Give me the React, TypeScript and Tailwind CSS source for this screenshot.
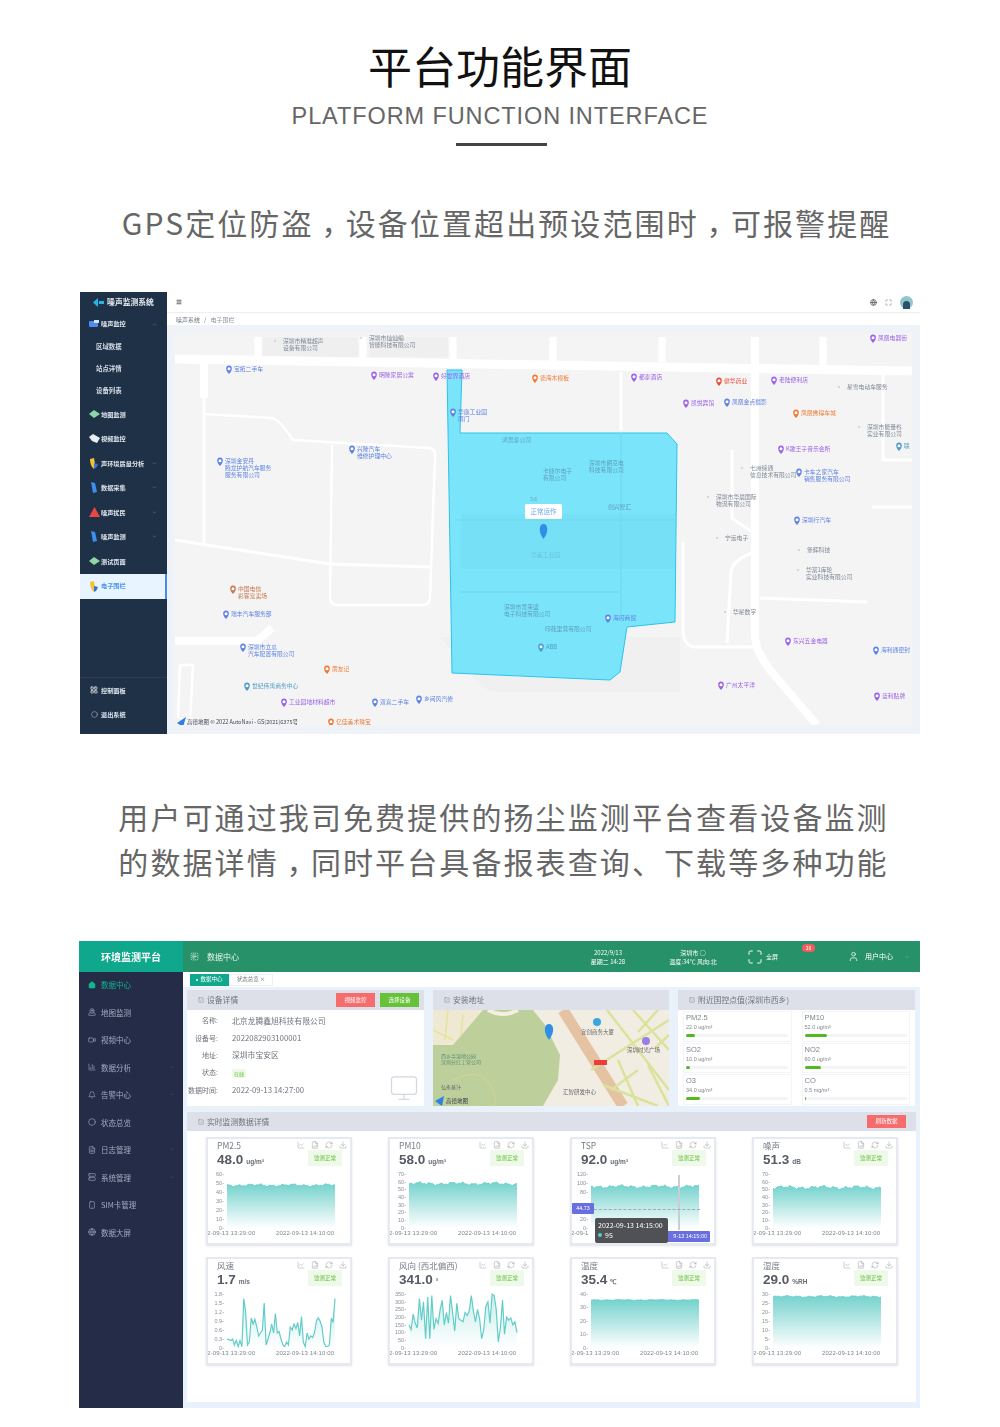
import React from "react";
import { Home, MapPinned, Video, BarChart3, Bell, Circle, FileText, Server, Smartphone, Globe, ChevronDown, ChevronUp, Maximize, User, Monitor, LayoutGrid, TextSelect, Menu, RefreshCw, Download, LineChart, FileBarChart, SquareCheck } from "lucide-react";

const CJK = '"Noto Sans CJK SC","Liberation Sans",sans-serif';

type Lbl = { x: number; y: number; c?: string; t: string[] };
const BLUE = "#5c82e2", PURPLE = "#9a62e6", ORANGE = "#ef7a33", RED = "#ee4b3a", TEAL = "#4d9cc7", BROWN = "#c9784f";
const labels: Lbl[] = [
  { x: 198, y: 49, t: ["深圳市精准超声", "设备有限公司"] },
  { x: 284, y: 46, t: ["深圳市灿灿编", "智能科技有限公司"] },
  { x: 149, y: 77, c: BLUE, t: ["宝拓二手车"] },
  { x: 294, y: 83, c: PURPLE, t: ["明隆家居公寓"] },
  { x: 356, y: 84, c: PURPLE, t: ["好世界酒店"] },
  { x: 373, y: 120, c: BLUE, t: ["华康工业园", "南门"] },
  { x: 140, y: 169, c: BLUE, t: ["深圳金安丹", "腾龙护航汽车服务", "服务有限公司"] },
  { x: 272, y: 157, c: BLUE, t: ["兴隆汽车", "维修护理中心"] },
  { x: 153, y: 297, c: BROWN, t: ["中国电信", "彩客宠卖场"] },
  { x: 146, y: 322, c: BLUE, t: ["瑞丰汽车服务部"] },
  { x: 163, y: 355, c: BLUE, t: ["深圳市立瓜", "汽车配置有限公司"] },
  { x: 247, y: 377, c: ORANGE, t: ["南友记"] },
  { x: 167, y: 394, c: TEAL, t: ["世纪伟禹商务中心"] },
  { x: 204, y: 410, c: PURPLE, t: ["工业园地材料超市"] },
  { x: 295, y: 410, c: BLUE, t: ["双喜二手车"] },
  { x: 339, y: 407, c: BLUE, t: ["乡间风汽修"] },
  { x: 251, y: 430, c: ORANGE, t: ["亿佳美术珠宝"] },
  { x: 793, y: 46, c: PURPLE, t: ["凤凰电器街"] },
  { x: 455, y: 86, c: ORANGE, t: ["德海木模板"] },
  { x: 554, y: 85, c: PURPLE, t: ["都泰酒店"] },
  { x: 639, y: 89, c: RED, t: ["健华药业"] },
  { x: 694, y: 88, c: PURPLE, t: ["老陆便利店"] },
  { x: 762, y: 95, t: ["星雪电动车服务"] },
  { x: 606, y: 111, c: PURPLE, t: ["凯悦宾馆"] },
  { x: 647, y: 110, c: BLUE, t: ["凤凰金点摄影"] },
  { x: 716, y: 121, c: ORANGE, t: ["凤凰佛得车城"] },
  { x: 782, y: 135, t: ["深圳市能量谷", "实业有限公司"] },
  { x: 819, y: 154, c: TEAL, t: ["联"] },
  { x: 701, y: 157, c: PURPLE, t: ["K歌王子音乐会所"] },
  { x: 665, y: 176, t: ["七洲综通", "信息技术有限公司"] },
  { x: 719, y: 180, c: BLUE, t: ["卡车之家汽车", "销售服务有限公司"] },
  { x: 631, y: 205, t: ["深圳市华晨国际", "物流有限公司"] },
  { x: 717, y: 228, c: BLUE, t: ["深圳行汽车"] },
  { x: 640, y: 246, t: ["宁远电子"] },
  { x: 722, y: 258, t: ["堡辉科技"] },
  { x: 721, y: 278, t: ["华富1库轮", "实业科技有限公司"] },
  { x: 648, y: 320, t: ["华星数字"] },
  { x: 708, y: 349, c: PURPLE, t: ["东兴五金电器"] },
  { x: 796, y: 358, c: BLUE, t: ["海利通密封"] },
  { x: 641, y: 393, c: PURPLE, t: ["广州太平洋"] },
  { x: 797, y: 404, c: PURPLE, t: ["蓝利贴牌"] },
  { x: 528, y: 326, c: BLUE, t: ["海闪商贸"] },
  { x: 461, y: 355, c: TEAL, t: ["ABB"] },
];
const inPolyText = [
  { x: 422, y: 150, t: "鸿景泰公司" },
  { x: 509, y: 173, t: "深圳市朗克电" },
  { x: 509, y: 180, t: "科技有限公司" },
  { x: 463, y: 181, t: "卡捷尔电子" },
  { x: 463, y: 188, t: "有限公司" },
  { x: 528, y: 217, t: "创兴智汇" },
  { x: 451, y: 265, t: "华美工业园" },
  { x: 424, y: 317, t: "深圳市景来盛" },
  { x: 424, y: 324, t: "电子科技有限公司" },
  { x: 465, y: 339, t: "印苑里营有限公司" },
];
const roads = [
  { d: "M95 67L832 79", w: 9 },
  { d: "M178 45V68M283 45V68M373 45V68M473 45V70M582 45V70M743 45V74", w: 7 },
  { d: "M675 45V345Q676 360 690 378L737 433", w: 8 },
  { d: "M124 70V106", w: 8 },
  { d: "M124 106V253M125 122L192 126Q200 128 213 148L350 156Q356 158 355 165L350 305Q350 313 343 313H258Q250 313 250 306L252 153", w: 2.5 },
  { d: "M95 248L250 272L350 275", w: 3 },
  { d: "M95 349H177L192 336", w: 8 },
  { d: "M100 373H113L110 431L98 425Z", w: 2.5 },
  { d: "M541 80V138M652 158V226L672 240M603 250V340Q604 354 615 355H673M672 261Q653 268 651 280L647 351M680 306L787 310M803 81V168H832M792 215H832", w: 3 },
];

function Pin({ x, y, c }: { x: number; y: number; c: string }) {
  return (
    <g>
      <path d={`M${x} ${y + 5}C${x - 4} ${y + 1} ${x - 3.6} ${y - 3.6} ${x} ${y - 3.6}C${x + 3.6} ${y - 3.6} ${x + 4} ${y + 1} ${x} ${y + 5}Z`} fill={c} />
      <circle cx={x} cy={y - 0.3} r="1.5" fill="#fff" />
    </g>
  );
}

function NoiseMap() {
  return (
    <svg viewBox="95 41 737 392" className="block h-full w-full bg-[#f4f4f5]" style={{ fontFamily: CJK }}>
      <rect x="183" y="45" width="95" height="20" fill="#efeff0" />
      <rect x="290" y="45" width="78" height="20" fill="#efeff0" />
      <path d="M360 345H600V400H420Q400 400 390 380Z" fill="#f0f0f1" />
      {roads.map((r, i) => (
        <path key={i} d={r.d} fill="none" stroke="#fff" strokeWidth={r.w} strokeLinejoin="round" />
      ))}
      <path d="M367 78H382L380 141H587L597 152L595 330L547 335L540 380L530 388L372 381Z" fill="#7ae4fa" stroke="#2cc3ea" strokeWidth="1" />
      <path d="M541 141V330M375 228H595M380 300H540" stroke="#74ddf5" strokeWidth="2" fill="none" />
      <rect x="381" y="222" width="214" height="55" fill="#72dcf4" opacity="0.5" />
      {labels.map((l, i) => (
        <g key={i}>
          {l.c ? <Pin x={l.x} y={l.y} c={l.c} /> : <circle cx={l.x - 3} cy={l.y} r="0.8" fill="#a9b2c2" />}
          {l.t.map((s, j) => (
            <text key={j} x={l.x + 5} y={l.y + 2 + j * 7} fontSize="5.8" fill={l.c || "#7e8795"}>
              {s}
            </text>
          ))}
        </g>
      ))}
      {inPolyText.map((t, i) => (
        <text key={i} x={t.x} y={t.y} fontSize="5.8" fill="#5d9fb8" opacity={t.t === "华美工业园" ? 0.45 : 1}>
          {t.t}
        </text>
      ))}
      <rect x="445" y="212" width="37" height="15" rx="1.5" fill="#fff" />
      <text x="463.5" y="222" fontSize="6.5" fill="#6aa8f0" textAnchor="middle">正常运作</text>
      <text x="450" y="209" fontSize="5" fill="#5d9fb8">3.6</text>
      <path d="M463.5 247C458 240 459 232 463.5 232C468 232 469 240 463.5 247Z" fill="#2f8fe6" />
      <path d="M97 431L106 425L103 435Z" fill="#2f7fe6" />
      <text x="107" y="432" fontSize="5.5" fill="#445">高德地图 © 2022 AutoNavi - GS(2021)6375号</text>
    </svg>
  );
}

function Shape({ k }: { k: string }) {
  if (k === "card") return <svg width="10" height="8" viewBox="0 0 10 8"><rect y="1" width="9" height="6" rx="1" fill="#4e8df0" /><rect x="5" width="5" height="3" fill="#cfe0fb" /></svg>;
  if (k === "dia") return <svg width="11" height="8" viewBox="0 0 11 8"><path d="M0 4L5 0L11 4L5 8Z" fill="#8ed6a6" /></svg>;
  if (k === "chat") return <svg width="11" height="9" viewBox="0 0 11 9"><path d="M0 3L4 0L11 4L8 9L3 7Z" fill="#e9eef5" /></svg>;
  if (k === "shield") return <svg width="10" height="11" viewBox="0 0 10 11"><path d="M1 1L5 0L6 6L5 11Q1 8 1 1Z" fill="#f4c430" /><path d="M5 5L9 6Q8 10 5 11Z" fill="#3b6fe0" /></svg>;
  if (k === "tall") return <svg width="8" height="11" viewBox="0 0 8 11"><path d="M1 0L5 1L7 10L3 11Z" fill="#3f8df0" /></svg>;
  if (k === "tri") return <svg width="11" height="10" viewBox="0 0 11 10"><path d="M5.5 0L11 10H0Z" fill="#ef4444" /></svg>;
  if (k === "grid") return <LayoutGrid size={8} color="#d7dde6" strokeWidth={2.5} />;
  return <Circle size={7} color="#d7dde6" strokeWidth={1.5} />;
}

function NoiseSide() {
  const Row = ({ icon, t, arrow, h = "h-[24.5px]" }: { icon: string; t: string; arrow?: "up" | "down"; h?: string }) => (
    <div className={`flex items-center ${h} pl-2 pr-[10px] text-[6.2px] font-bold whitespace-nowrap text-[#dfe5ee]`}>
      <span className="flex w-[12px] justify-center"><Shape k={icon} /></span>
      <span className="ml-[1px] flex-1">{t}</span>
      {arrow === "up" && <ChevronUp size={5} color="#8b97a8" />}
      {arrow === "down" && <ChevronDown size={5} color="#8b97a8" />}
    </div>
  );
  return (
    <aside className="flex w-[87px] shrink-0 flex-col bg-[#1f3146]">
      <div className="flex h-[20px] items-center justify-center gap-[3px] text-[7.8px] font-bold text-[#e6ecf3]">
        <svg width="11" height="9" viewBox="0 0 11 9"><path d="M0 4.5L5 0V9Z" fill="#27b5e8" /><rect x="6" y="3" width="5" height="3" fill="#27b5e8" /></svg>
        噪声监测系统
      </div>
      <Row icon="card" t="噪声监控" arrow="up" h="h-[24px]" />
      {["区域数据", "站点详情", "设备列表"].map((s) => (
        <div key={s} className="flex h-[22px] items-center pl-[16px] text-[6.4px] font-bold text-[#d5dce6]">{s}</div>
      ))}
      <Row icon="dia" t="地图监测" />
      <Row icon="chat" t="视频监控" />
      <Row icon="shield" t="声环境质量分析" arrow="down" />
      <Row icon="tall" t="数据采集" arrow="down" />
      <Row icon="tri" t="噪声扰民" arrow="down" />
      <Row icon="tall" t="噪声监测" arrow="down" />
      <Row icon="dia" t="测试页面" />
      <div className="flex h-[25px] items-center border-r-2 border-[#3f8df0] bg-[#e8f4ff] pl-2 text-[6.2px] font-bold text-[#4c96ee]">
        <span className="flex w-[12px] justify-center"><Shape k="shield" /></span>
        <span className="ml-[1px]">电子围栏</span>
      </div>
      <div className="flex-1" />
      <div className="border-t border-[#2b3d52] pb-[7px]">
        <Row icon="grid" t="控制面板" />
        <Row icon="circle" t="退出系统" />
      </div>
    </aside>
  );
}

function ScreenOne() {
  return (
    <div className="flex h-[442px] w-[840px] overflow-hidden bg-white blur-[0.7px]">
      <NoiseSide />
      <main className="flex min-w-0 flex-1 flex-col">
        <div className="flex h-[21px] items-center justify-between border-b border-[#eceef2] pl-[9px] pr-[7px]">
          <Menu size={6} color="#333" strokeWidth={3} />
          <div className="flex items-center gap-[8px]">
            <Globe size={7} color="#555" strokeWidth={2.5} />
            <Maximize size={7} color="#777" />
            <span className="flex h-[13px] w-[13px] items-end justify-center rounded-full bg-[#8fc6c9]">
              <span className="h-[8px] w-[7px] rounded-t-full bg-[#2f4f6e]" />
            </span>
          </div>
        </div>
        <div className="flex h-[12px] items-center gap-[4px] pl-[9px] text-[6px] text-[#6e7785]">
          <span>噪声系统</span><span>/</span><span className="text-[#8a92a0]">电子围栏</span>
        </div>
        <div className="min-h-0 flex-1 bg-[#eff2f7] p-[8px] pb-[9px]">
          <NoiseMap />
        </div>
      </main>
    </div>
  );
}

function series(seed: number, base: number, amp: number, n = 70) {
  const out: number[] = [];
  for (let i = 0; i < n; i++) {
    const v = base + amp * (Math.sin(i * 0.9 + seed) * 0.5 + Math.sin(i * 2.3 + seed * 2) * 0.35 + Math.sin(i * 0.27 + seed * 3) * 0.4);
    out.push(v);
  }
  return out;
}
const wind = [0.3, 0.28, 0.25, 0.3, 0.1, 0.25, 0.05, 0.25, 0.05, 1.65, 1.2, 0.1, 0.2, 1.0, 0.8, 0.95, 0.7, 0.4, 0.5, 0.6, 1.5, 0.1, 0.3, 0.5, 0.8, 0.5, 1.15, 0.5, 0.55, 0.3, 0.1, 0.05, 0.2, 0.1, 0.7, 0.6, 0.8, 0.65, 0.85, 0.4, 1.05, 0.2, 0.05, 0.5, 0.3, 0.4, 0.35, 0.5, 0.9, 1.0, 0.9, 0.7, 0.2, 0.05, 0.05, 0.1, 1.0, 0.85, 1.65];
const dir = [150, 120, 220, 160, 130, 320, 180, 300, 60, 330, 60, 340, 120, 190, 160, 250, 310, 150, 230, 160, 340, 230, 110, 290, 190, 180, 170, 230, 210, 240, 340, 240, 170, 250, 190, 60, 120, 270, 300, 160, 350, 340, 250, 40, 130, 310, 90, 200, 180, 195, 150, 170, 100];

type Cfg = { title: string; val: string; unit: string; max: number; ticks: number[]; data: number[] };
const cards: Cfg[] = [
  { title: "PM2.5", val: "48.0", unit: "ug/m³", max: 60, ticks: [0, 10, 20, 30, 40, 50, 60], data: series(1, 47.5, 1.6) },
  { title: "PM10", val: "58.0", unit: "ug/m³", max: 70, ticks: [0, 10, 20, 30, 40, 50, 60, 70], data: series(2, 57.5, 2.2) },
  { title: "TSP", val: "92.0", unit: "ug/m³", max: 120, ticks: [0, 20, 80, 100, 120], data: series(3, 92, 4) },
  { title: "噪声", val: "51.3", unit: "dB", max: 70, ticks: [0, 10, 20, 30, 40, 50, 60, 70], data: series(4, 52.5, 2.6) },
  { title: "风速", val: "1.7", unit: "m/s", max: 1.8, ticks: [0, 0.3, 0.6, 0.9, 1.2, 1.5, 1.8], data: wind },
  { title: "风向 (西北偏西)", val: "341.0", unit: "°", max: 350, ticks: [0, 50, 100, 150, 200, 250, 300, 350], data: dir },
  { title: "温度", val: "35.4", unit: "℃", max: 40, ticks: [0, 10, 20, 30, 40], data: series(5, 35.6, 0.35) },
  { title: "湿度", val: "29.0", unit: "%RH", max: 30, ticks: [0, 5, 10, 15, 20, 25, 30], data: series(6, 28.6, 0.55) },
];

function Chart({ c, id }: { c: Cfg; id: number }) {
  const x0 = 19, x1 = 127, top = 3, bot = 57;
  const xs = (i: number) => x0 + (i * (x1 - x0)) / (c.data.length - 1);
  const ys = (v: number) => bot - (v / c.max) * (bot - top);
  const line = c.data.map((v, i) => `${i ? "L" : "M"}${xs(i).toFixed(1)} ${ys(v).toFixed(1)}`).join("");
  const gid = `g${id}`;
  const spiky = id === 4 || id === 5;
  return (
    <svg viewBox="0 0 142 72" className="block h-[72px] w-[142px]" style={{ fontFamily: '"Liberation Sans",sans-serif' }}>
      <defs>
        <linearGradient id={gid} x1="0" y1="0" x2="0" y2="1">
          <stop offset="0" stopColor="#74d2cd" />
          <stop offset="1" stopColor="#ffffff" />
        </linearGradient>
      </defs>
      {c.ticks.map((t) => (
        <text key={t} x="16" y={ys(t) + 1.8} fontSize="5.5" fill="#8a8f99" textAnchor="end">{t}-</text>
      ))}
      <path d={`${line}L${x1} ${bot}L${x0} ${bot}Z`} fill={`url(#${gid})`} opacity={spiky ? 0.4 : 1} />
      <path d={line} fill="none" stroke="#62cdc8" strokeWidth={spiky ? 1.2 : 0.8} />
      {id === 2 ? (
        <text x="-1" y="64" fontSize="6" fill="#7f848e">2-09-1</text>
      ) : (
        <>
          <text x="-1" y="64" fontSize="6" fill="#7f848e" textLength="48">2-09-13 13:29:00</text>
          <text x="68" y="64" fontSize="6" fill="#7f848e" textLength="58">2022-09-13 14:10:00</text>
        </>
      )}
    </svg>
  );
}

function MiniIcons() {
  return (
    <div className="flex items-center gap-[6px] text-[#8b8f99]">
      <LineChart size={8} strokeWidth={1.3} />
      <FileBarChart size={8} strokeWidth={1.3} />
      <RefreshCw size={8} strokeWidth={1.3} />
      <Download size={8} strokeWidth={1.3} />
    </div>
  );
}

function DataCard({ c, i }: { c: Cfg; i: number }) {
  return (
    <div className="relative h-[108px] w-[146px] border-2 border-[#e6e8f2] bg-white shadow-[0_1px_2px_#dfe2ea]">
      <div className="flex h-[32px] justify-between pl-[9px] pr-[3px]">
        <div>
          <div className="text-[8.5px] leading-[12px] text-[#777c86]">{c.title}</div>
          <div className="mt-[1px] flex items-baseline gap-[3px] text-[13.5px] font-bold leading-[15px] text-[#555a63] font-['Liberation_Sans']">
            {c.val}<span className="text-[6.5px] text-[#666b75]">{c.unit}</span>
          </div>
        </div>
        <div className="flex flex-col items-end pt-[2px]">
          <MiniIcons />
          <div className="mr-[5px] mt-[1px] flex h-[16px] w-[34px] items-center justify-center bg-[#eef9ea] text-[5.5px] text-[#67c23a]">监测正常</div>
        </div>
      </div>
      <Chart c={c} id={i} />
      {i === 2 && (
        <>
          <div className="absolute left-[106px] top-[36px] h-[55px] w-[1.5px] bg-[#c9cdd4]" />
          <div className="absolute left-[22px] top-[70px] w-[106px] border-t border-dashed border-[#a5a9b2]" />
          <div className="absolute left-0 top-[64px] flex h-[11px] w-[22px] items-center justify-center rounded-[1px] bg-[#6a6fe0] text-[5.5px] text-white">44.73</div>
          <div className="absolute left-[73px] top-[92px] flex h-[11px] w-[65px] items-center justify-end rounded-[1px] bg-[#6a6fe0] pr-[3px] text-[5.5px] text-white">9-13 14:15:00</div>
          <div className="absolute left-[23px] top-[79px] h-[25px] w-[73px] rounded-[2px] bg-[#4f5154] px-[3px] py-[2px] text-[7px] leading-[10px] text-white">
            <div>2022-09-13 14:15:00</div>
            <div className="flex items-center gap-[3px]"><span className="h-[4px] w-[4px] rounded-full bg-[#4fd1c5]" />95</div>
          </div>
        </>
      )}
    </div>
  );
}

function MiniMap() {
  return (
    <svg viewBox="0 0 236 96" className="block h-full w-full bg-[#f2ede3]" style={{ fontFamily: CJK }}>
      <path d="M0 35L30 20L45 0H100L112 15L127 45L125 70L110 96H0Z" fill="#bdd09c" />
      <path d="M0 35H20L50 0H0Z" fill="#efe9d4" />
      <path d="M0 20L20 30M15 0L12 30M30 5L28 25" stroke="#e6e39a" strokeWidth="1.5" fill="none" />
      <path d="M55 0Q70 8 85 0" stroke="#f3efe2" strokeWidth="4" fill="none" />
      <path d="M20 70Q50 55 60 80T40 96" stroke="#dcd98f" strokeWidth="0.7" fill="none" />
      <path d="M130 0L190 96" stroke="#e5c2a1" strokeWidth="11" />
      <path d="M174 0L236 80M158 60L236 10M200 0L236 40M170 75L225 96M185 50L205 96M215 55L236 96M205 22L225 0M222 38L236 25M178 80L205 60" stroke="#d9e39c" strokeWidth="2.5" fill="none" />
      <rect x="161" y="50" width="13" height="5" fill="#ee3b3b" />
      <path d="M116 30C110 22 111 14 116 14C121 14 122 22 116 30Z" fill="#2f8fe6" />
      <circle cx="164" cy="12" r="4" fill="#3aa5de" />
      <text x="148" y="24" fontSize="5.5" fill="#666">宜创商务大厦</text>
      <circle cx="213" cy="31" r="4" fill="#9a7fe0" />
      <text x="194" y="42" fontSize="5.5" fill="#666">深圳时光广场</text>
      <text x="130" y="84" fontSize="5.5" fill="#666">汇智研发中心</text>
      <text x="8" y="48" fontSize="5" fill="#5f8f75">西乡寺湿地公园</text>
      <text x="8" y="54" fontSize="5" fill="#5f8f75">深圳分红工管公司</text>
      <text x="8" y="79" fontSize="5" fill="#666">弘永基汁</text>
      <path d="M2 91L11 86L9 96Z" fill="#2f7fe6" />
      <text x="13" y="93" fontSize="5.5" fill="#334">高德地图</text>
    </svg>
  );
}

function PanelHead({ t, right }: { t: string; right?: React.ReactNode }) {
  return (
    <div className="flex h-[20px] shrink-0 items-center justify-between bg-[#dde0e8] pl-[11px] pr-[5px] text-[7.8px] text-[#6d727c]">
      <span className="flex items-center gap-[3px]"><SquareCheck size={6} strokeWidth={1.5} />{t}</span>
      {right}
    </div>
  );
}

const air = [
  ["PM2.5", "22.0 ug/m³", "w-[9px]"],
  ["PM10", "52.0 ug/m³", "w-[22px]"],
  ["SO2", "10.0 ug/m³", "w-[4px]"],
  ["NO2", "60.0 ug/m³", "w-[16px]"],
  ["O3", "34.0 ug/m³", "w-[14px]"],
  ["CO", "0.5 mg/m³", "w-[1px]"],
];

const menu: [React.ComponentType<any>, string, boolean][] = [
  [Home, "数据中心", false],
  [MapPinned, "地图监测", false],
  [Video, "视频中心", false],
  [BarChart3, "数据分析", true],
  [Bell, "告警中心", true],
  [Circle, "状态总览", false],
  [FileText, "日志管理", true],
  [Server, "系统管理", true],
  [Smartphone, "SIM卡管理", false],
  [Globe, "数据大屏", false],
];

function ScreenTwo() {
  return (
    <div className="h-[467px] w-[841px] overflow-hidden bg-white blur-[0.55px]">
      <header className="flex h-[31px] items-center bg-[#27916a] text-white">
        <div className="flex h-full w-[104px] items-center justify-center bg-[#0fa88c] text-[10px] font-bold">环境监测平台</div>
        <TextSelect size={9} className="ml-[7px]" color="#d8efe6" />
        <span className="ml-[8px] text-[8px] text-[#e6f4ee]">数据中心</span>
        <div className="ml-auto w-[60px] text-center text-[6px] leading-[9px]">2022/9/13<br />星期二 14:28</div>
        <div className="ml-[20px] w-[70px] text-center text-[6px] leading-[9px]">深圳市 ○<br />温度:34℃ 风向:北</div>
        <div className="ml-[19px] flex items-center gap-[3px] text-[6px]"><Maximize size={16} strokeWidth={1.5} />全屏</div>
        <div className="relative ml-[70px] flex items-center gap-[3px] text-[7px]">
          <span className="absolute -left-[46px] -top-[7px] h-[8px] w-[13px] rounded-full bg-[#f25c5c] text-center text-[5px] leading-[8px]">28</span>
          <User size={11} strokeWidth={1.6} />
          <span className="ml-[3px]">用户中心</span>
        </div>
        <ChevronDown size={6} className="ml-[11px] mr-[10px]" color="#6fb79a" />
      </header>
      <div className="flex h-[436px]">
        <aside className="w-[104px] shrink-0 bg-[#242c47]">
          <div className="-mt-[1px]">
            {menu.map(([Icon, t, arrow], i) => (
              <div key={t} className="flex h-[27.5px] items-center pl-[9px] pr-[9px] text-[7.5px] text-[#a4abc0]">
                <Icon size={8} color={i === 0 ? "#11b592" : "#b8bdcc"} fill={i === 0 ? "#11b592" : "none"} strokeWidth={1.6} />
                <span className={`ml-[5px] flex-1 ${i === 0 ? "text-[#11b592]" : ""}`}>{t}</span>
                {arrow && <ChevronDown size={5} color="#5d6580" />}
              </div>
            ))}
          </div>
        </aside>
        <main className="flex min-w-0 flex-1 flex-col bg-[#e9f1fb]">
          <div className="flex h-[15px] shrink-0 items-center bg-white pl-[7px] text-[5.5px] text-[#777]">
            <span className="flex h-[12px] w-[39px] items-center justify-center gap-[2px] bg-[#0fa88c] text-white"><span className="h-[2px] w-[2px] rounded-full bg-white" />数据中心</span>
            <span className="flex h-[12px] w-[44px] items-center justify-center border border-[#edf0f4]">状态总览 ×</span>
          </div>
          <div className="flex flex-1 flex-col pb-[6px] pl-[4px] pr-[4px] pt-[3px]">
            <div className="flex h-[116px] gap-[9px]">
              <section className="flex w-[237px] flex-col bg-white">
                <PanelHead
                  t="设备详情"
                  right={
                    <span className="flex gap-[5px] text-[5.5px] text-white">
                      <span className="flex h-[14px] w-[39px] items-center justify-center bg-[#f56c6c]">视频监控</span>
                      <span className="flex h-[14px] w-[39px] items-center justify-center bg-[#67c23a]">选择设备</span>
                    </span>
                  }
                />
                <div className="relative flex-1 pt-[2px] text-[7.8px] text-[#6f747e]">
                  {[["名称:", "北京龙腾鑫旭科技有限公司"], ["设备号:", "2022082903100001"], ["地址:", "深圳市宝安区"], ["状态:", ""], ["数据时间:", "2022-09-13 14:27:00"]].map(([a, b], i) => (
                    <div key={a} className="flex h-[17.3px] items-center">
                      <span className="flex w-[31px] shrink-0 justify-end whitespace-nowrap text-[7px]">{a}</span>
                      <span className="ml-[14px] whitespace-nowrap">
                        {i === 3 ? <span className="bg-[#eef9ea] px-[2px] py-[1px] text-[5px] text-[#67c23a]">在线</span> : b}
                      </span>
                    </div>
                  ))}
                  <Monitor size={30} strokeWidth={1} color="#d3d7df" className="absolute bottom-[3px] right-[5px]" />
                </div>
              </section>
              <section className="flex w-[236px] flex-col">
                <PanelHead t="安装地址" />
                <div className="min-h-0 flex-1"><MiniMap /></div>
              </section>
              <section className="flex w-[237px] flex-col bg-white">
                <PanelHead t="附近国控点值(深圳市西乡)" />
                <div className="grid flex-1 grid-cols-2 grid-rows-3 gap-x-[10px] gap-y-[1px] px-[5px] py-[1px]">
                  {air.map(([a, b, w]) => (
                    <div key={a} className="border border-[#f3f4f7] pl-[2px] pr-[2px] pt-[1px]">
                      <div className="font-['Liberation_Sans'] text-[7.5px] leading-[10px] text-[#80858e]">{a}</div>
                      <div className="font-['Liberation_Sans'] text-[5.5px] leading-[8px] text-[#80858e]">{b}</div>
                      <div className="mt-[3px] h-[3px] w-[102px] rounded-full bg-[#f3f4f6]">
                        <div className={`h-full rounded-full bg-[#54b820] ${w}`} />
                      </div>
                    </div>
                  ))}
                </div>
              </section>
            </div>
            <section className="mt-[6px] flex flex-1 flex-col bg-white">
              <div className="flex h-[19px] items-center justify-between bg-[#dde0e8] pl-[11px] pr-[10px] text-[7.8px] text-[#6d727c]">
                <span className="flex items-center gap-[3px]"><SquareCheck size={6} strokeWidth={1.5} />实时监测数据详情</span>
                <span className="flex h-[13px] w-[39px] items-center justify-center bg-[#f56c6c] text-[5.5px] text-white">刷新数据</span>
              </div>
              <div className="grid grid-cols-[repeat(4,146px)] gap-x-[36px] gap-y-[12px] pl-[19px] pt-[6px]">
                {cards.map((c, i) => (
                  <DataCard key={c.title} c={c} i={i} />
                ))}
              </div>
            </section>
          </div>
        </main>
      </div>
    </div>
  );
}

const Comma = () => <span className="inline-block translate-y-[8px] font-['Noto_Sans_CJK_TC']">，</span>;

export default function App() {
  return (
    <div className="flex h-[1427px] w-[1000px] flex-col items-center overflow-hidden bg-white" style={{ fontFamily: CJK }}>
      <h1 className="mt-[35px] text-center text-[44px] font-normal leading-[60px] text-[#111]">平台功能界面</h1>
      <div className="mt-[6px] text-center text-[23.5px] leading-[30px] tracking-[0.9px] text-[#666]" style={{ fontFamily: '"Liberation Sans",sans-serif' }}>PLATFORM FUNCTION INTERFACE</div>
      <div className="ml-[3px] mt-[12px] h-[3px] w-[91px] bg-[#444]" />
      <p className="ml-[13px] mt-[54px] whitespace-nowrap text-center text-[30px] leading-[45px] tracking-[2.1px] text-[#666]">GPS定位防盗<Comma />设备位置超出预设范围时<Comma />可报警提醒</p>
      <div className="mt-[47px]"><ScreenOne /></div>
      <p className="ml-[7px] mt-[60px] whitespace-nowrap text-center text-[30px] leading-[45px] tracking-[2.1px] text-[#666]">
        用户可通过我司免费提供的扬尘监测平台查看设备监测<br />的数据详情<Comma />同时平台具备报表查询、下载等多种功能
      </p>
      <div className="-ml-[1px] mt-[57px]"><ScreenTwo /></div>
    </div>
  );
}
